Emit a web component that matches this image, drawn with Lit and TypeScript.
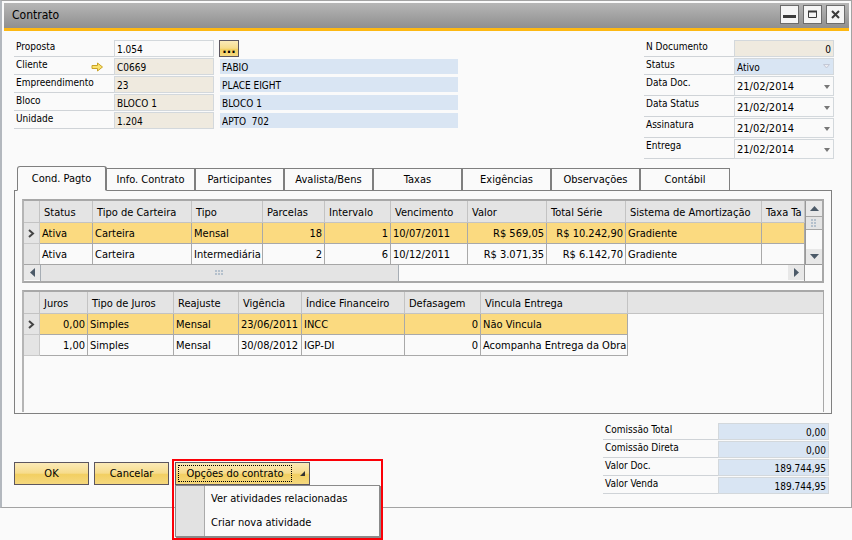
import { LitElement, html, css, svg, nothing } from "lit";
import { customElement } from "lit/decorators.js";
import { classMap } from "lit/directives/class-map.js";

const arrowPaths: Record<string, string> = {
  up: "M0 5L4.500 0L9 5Z",
  down: "M0 0H9L4.500 5Z",
  left: "M5 0V9L0 4.500Z",
  right: "M0 0V9L5 4.500Z",
};

const glyph = (dir: string) => {
  const tall = dir === "left" || dir === "right";
  return html`<svg width=${tall ? 5 : 9} height=${tall ? 9 : 5} aria-hidden="true">
    <path d=${arrowPaths[dir]} fill="#4c5a68"></path>
  </svg>`;
};

const grip = (w: number, h: number) => {
  const cols = w / 3;
  const rows = h / 3;
  const dots = [];
  for (let r = 0; r < rows; r++)
    for (let c = 0; c < cols; c++)
      dots.push(svg`<rect x=${c * 3} y=${r * 3} width="2" height="2" fill="#b4c0cc"></rect>`);
  return html`<svg width=${w} height=${h} aria-hidden="true">${dots}</svg>`;
};

interface Column {
  title: string;
  width: number;
  num?: boolean;
}

@customElement("data-grid")
class DataGrid extends LitElement {
  static properties = {
    columns: { attribute: false },
    rows: { attribute: false },
    label: {},
    fill: { type: Boolean },
  };
  declare columns: Column[];
  declare rows: string[][];
  declare label: string;
  declare fill: boolean;

  static styles = css`
    :host {
      display: block;
      overflow: hidden;
      min-width: 0;
    }
    table {
      border-collapse: separate;
      border-spacing: 0;
      table-layout: fixed;
      width: 100%;
      font: inherit;
    }
    th {
      box-sizing: border-box;
      height: 22px;
      padding: 2px 0 0 4px;
      background: #e4e4e4;
      border-right: 1px solid #c3c3c3;
      border-bottom: 1px solid #c3c3c3;
      font-weight: normal;
      text-align: left;
      white-space: nowrap;
    }
    td {
      box-sizing: border-box;
      height: 21px;
      padding: 1px 2px 0;
      border-right: 1px solid #a9a9a9;
      border-bottom: 1px solid #a9a9a9;
      white-space: nowrap;
    }
    td.num {
      text-align: right;
    }
    tr.current td {
      background: #fbda80;
    }
    tr td.mark,
    tr.current td.mark {
      padding: 0;
      background: #e4e4e4;
      border-color: #c9c9c9;
      text-align: center;
    }
    td.mark svg {
      display: block;
      margin: 0 auto;
    }
    th.rest,
    td.rest {
      border-right: 0;
    }
    tr td.rest,
    tr.current td.rest {
      border-bottom: 0;
      background: none;
    }
  `;

  render() {
    return html`<table aria-label=${this.label}>
      <colgroup>
        <col style="width:16px" />
        ${this.columns.map((c) => html`<col style=${c.width ? `width:${c.width}px` : ""} />`)}
        ${this.fill ? html`<col />` : nothing}
      </colgroup>
      <thead>
        <tr>
          <th></th>
          ${this.columns.map((c) => html`<th scope="col">${c.title}</th>`)}
          ${this.fill ? html`<th class="rest"></th>` : nothing}
        </tr>
      </thead>
      <tbody>
        ${this.rows.map(
          (row, i) => html`<tr class=${classMap({ current: i === 0 })}>
            <td class="mark">
              ${i === 0
                ? html`<svg width="7" height="9" aria-hidden="true">
                    <path d="M1 1L5 4.500L1 8" fill="none" stroke="#444" stroke-width="2"></path>
                  </svg>`
                : nothing}
            </td>
            ${this.columns.map((c, j) => html`<td class=${classMap({ num: !!c.num })}>${row[j]}</td>`)}
            ${this.fill ? html`<td class="rest"></td>` : nothing}
          </tr>`
        )}
      </tbody>
    </table>`;
  }
}

const series: Column[] = [
  { title: "Status", width: 53 },
  { title: "Tipo de Carteira", width: 99 },
  { title: "Tipo", width: 71 },
  { title: "Parcelas", width: 62, num: true },
  { title: "Intervalo", width: 66, num: true },
  { title: "Vencimento", width: 77 },
  { title: "Valor", width: 79, num: true },
  { title: "Total Série", width: 79, num: true },
  { title: "Sistema de Amortização", width: 136 },
  { title: "Taxa Ta", width: 0, num: true },
];
const seriesRows = [
  ["Ativa", "Carteira", "Mensal", "18", "1", "10/07/2011", "R$ 569,05", "R$ 10.242,90", "Gradiente", ""],
  ["Ativa", "Carteira", "Intermediária", "2", "6", "10/12/2011", "R$ 3.071,35", "R$ 6.142,70", "Gradiente", ""],
];

const interest: Column[] = [
  { title: "Juros", width: 48, num: true },
  { title: "Tipo de Juros", width: 86 },
  { title: "Reajuste", width: 65 },
  { title: "Vigência", width: 63 },
  { title: "Índice Financeiro", width: 103 },
  { title: "Defasagem", width: 76, num: true },
  { title: "Vincula Entrega", width: 147 },
];
const interestRows = [
  ["0,00", "Simples", "Mensal", "23/06/2011", "INCC", "0", "Não Vincula"],
  ["1,00", "Simples", "Mensal", "30/08/2012", "IGP-DI", "0", "Acompanha Entrega da Obra"],
];

const tabs = [
  "Cond. Pagto",
  "Info. Contrato",
  "Participantes",
  "Avalista/Bens",
  "Taxas",
  "Exigências",
  "Observações",
  "Contábil",
];

const client = [
  ["Cliente", "C0669", "FABIO"],
  ["Empreendimento", "23", "PLACE EIGHT"],
  ["Bloco", "BLOCO 1", "BLOCO 1"],
  ["Unidade", "1.204", "APTO  702"],
];

const totals = [
  ["Comissão Total", "0,00"],
  ["Comissão Direta", "0,00"],
  ["Valor Doc.", "189.744,95"],
  ["Valor Venda", "189.744,95"],
];

@customElement("app-root")
class AppRoot extends LitElement {
  static styles = css`
    :host {
      display: block;
      min-height: 100vh;
      background: #fafafa;
      color: #000;
      font: 11px/14px "DejaVu Sans Condensed", "Noto Sans", sans-serif;
    }
    * {
      box-sizing: border-box;
    }
    button,
    input,
    select {
      margin: 0;
      font: inherit;
      color: inherit;
      border-radius: 0;
      outline: 0;
    }
    .window {
      border: 1px solid #a3a3a3;
      border-left: 2px solid #b3b8be;
      background: #fafafa;
    }
    .titlebar {
      display: flex;
      align-items: center;
      gap: 4px;
      height: 28px;
      margin: 2px 2px 0;
      padding: 0 4px 2px 8px;
      background: linear-gradient(#b6b6b6, #8f8f8f);
      border-bottom: 3px solid #fdb813;
    }
    h1 {
      flex: 1;
      margin: 0;
      font-size: 12px;
      font-weight: normal;
    }
    .winbtn {
      display: flex;
      align-items: center;
      justify-content: center;
      width: 19px;
      height: 19px;
      padding: 0;
      background: #f5f5f5;
      border: 1px solid #6c6c6c;
    }
    .head {
      display: flex;
      justify-content: space-between;
      align-items: flex-start;
      padding: 9px 17px 0 12px;
      font-size: 10px;
    }
    .line {
      display: flex;
      height: 17px;
      margin-bottom: 1px;
    }
    .line.tall {
      height: 20px;
    }
    .line label {
      display: flex;
      justify-content: space-between;
      width: 100px;
      padding: 0 10px 0 2px;
      line-height: 13px;
      white-space: nowrap;
      border-bottom: 1px solid #cfd3d7;
    }
    .dates .line label {
      width: 90px;
    }
    .line label svg {
      margin-top: 4px;
    }
    .box {
      width: 100px;
      min-width: 0;
      height: 100%;
      padding: 2px 2px 0;
      border: 1px solid #d3d8dc;
      background: #fafafa;
    }
    .box.locked {
      background: #efeadf;
    }
    .box.blue {
      background: #d9e5f3;
    }
    .box.right {
      text-align: right;
    }
    .desc {
      width: 238px;
      height: 15px;
      margin: 1px 0 1px 6px;
      padding: 2px 2px 0;
      border: 0;
      background: #d9e5f3;
    }
    .browse {
      width: 20px;
      height: 17px;
      margin-left: 5px;
      padding: 0;
      font-size: 13px;
      font-weight: bold;
      line-height: 12px;
    }
    .gold {
      border: 1px solid #5c5660;
      background: linear-gradient(#fbeab8, #f6dc8c 48%, #f2cf62 55%, #f5d87e);
    }
    .combo {
      position: relative;
      width: 100px;
      height: 100%;
    }
    .combo select {
      appearance: none;
      padding: 1px 2px 0;
      font-size: 11px;
    }
    .combo .small {
      padding-top: 2px;
      font-size: 10px;
    }
    .combo svg {
      position: absolute;
      right: 4px;
      top: 9px;
      pointer-events: none;
    }
    .combo .small + svg {
      top: 6px;
    }
    .tabs {
      display: flex;
      align-items: flex-end;
      margin: 6px 0 0 15px;
      height: 25px;
    }
    .tab {
      width: 89px;
      height: 23px;
      padding: 0;
      background: #fafafa;
      border: 1px solid #7f7f7f;
      border-left-width: 0;
      border-right-width: 2px;
      white-space: nowrap;
    }
    .tab:last-child {
      border-right-width: 1px;
    }
    .tab.on {
      width: 90px;
      height: 25px;
      border-left-width: 1px;
      border-bottom-color: #fafafa;
      border-radius: 3px 3px 0 0;
      z-index: 1;
    }
    .panel {
      margin: -1px 19px 0 12px;
      padding: 8px 7px 1px;
      border: 1px solid #808080;
    }
    .grid {
      border: 2px solid #a8a8a8;
      border-left-color: #b5b5b5;
    }
    .scroller {
      display: grid;
      grid-template-columns: 1fr 17px;
    }
    .vbar {
      display: flex;
      flex-direction: column;
      justify-content: space-between;
      border-left: 1px solid #999;
      border-bottom: 1px solid #999;
    }
    .arrow {
      display: flex;
      align-items: center;
      justify-content: center;
      width: 16px;
      height: 15px;
      padding: 0;
      border: 0;
      background: #e8e8e8;
    }
    .vthumb {
      display: flex;
      align-items: center;
      justify-content: center;
      height: 14px;
      margin-bottom: auto;
      background: #e4e4e4;
      border: 1px solid #a6a6a6;
      border-width: 1px 0;
    }
    .hbar {
      display: flex;
      height: 17px;
      margin-top: -1px;
      border-top: 1px solid #a6a6a6;
      border-right: 1px solid #999;
    }
    .hthumb {
      display: flex;
      align-items: center;
      justify-content: center;
      width: 46%;
      margin-right: auto;
      background: #e4e4e4;
      border: 1px solid #a6adb4;
      border-width: 0 1px;
    }
    .second {
      min-height: 122px;
      margin-top: 7px;
      border-width: 2px 1px 0 2px;
    }
    .foot {
      display: flex;
      justify-content: space-between;
      align-items: flex-start;
      padding: 9px 22px 12px 12px;
    }
    .actions {
      display: flex;
      gap: 5px;
      padding-top: 39px;
    }
    .action {
      width: 75px;
      height: 23px;
      padding: 0;
    }
    .split {
      position: relative;
      margin-left: 1px;
    }
    .options {
      display: flex;
      align-items: center;
      width: 135px;
      height: 23px;
      padding: 0 4px 0 2px;
    }
    .options span {
      width: 114px;
      height: 17px;
      line-height: 15px;
      border: 1px dotted #000;
      white-space: nowrap;
    }
    .options svg {
      margin-left: auto;
    }
    .outline {
      position: absolute;
      left: -3px;
      top: -3px;
      width: 211px;
      height: 81px;
      border: 2px solid #fb0007;
      pointer-events: none;
    }
    .menu {
      position: absolute;
      left: 0;
      top: 23px;
      width: 205px;
      margin: 0;
      padding: 1px 1px 1px 28px;
      border: 1px solid #8a8a8a;
      background: linear-gradient(90deg, #e2e2e2 28px, #aaa 28px, #aaa 29px, #fafafa 29px);
      box-shadow: 1px 1px 0 #8a8a8a;
      list-style: none;
    }
    .menu button {
      display: block;
      width: 100%;
      height: 24px;
      padding: 0 0 0 7px;
      border: 0;
      background: none;
      text-align: left;
      white-space: nowrap;
    }
    .sums {
      font-size: 10px;
    }
    .sums .line label {
      width: 115px;
    }
    .sums .box {
      width: 111px;
    }
  `;

  private date(label: string, id: string) {
    return html`<div class="line tall">
      <label for=${id}>${label}</label>
      <div class="combo">
        <select class="box" id=${id}><option>21/02/2014</option></select>
        <svg width="6" height="4"><path d="M0 0H6L3 4Z" fill="#777"></path></svg>
      </div>
    </div>`;
  }

  render() {
    return html`<main class="window">
      <header class="titlebar">
        <h1>Contrato</h1>
        <button class="winbtn" aria-label="Minimizar">
          <svg width="13" height="13"><rect y="7" width="13" height="3" fill="#3b3b3b"></rect></svg>
        </button>
        <button class="winbtn" aria-label="Maximizar">
          <svg width="9" height="9">
            <path d="M0.500 1.500H8.500V7.500H0.500Z" fill="none" stroke="#3b3b3b"></path>
            <path d="M0 1.500H9" stroke="#3b3b3b" stroke-width="2"></path>
          </svg>
        </button>
        <button class="winbtn" aria-label="Fechar">
          <svg width="9" height="9"><path d="M1 1L8 8M8 1L1 8" stroke="#3b3b3b" stroke-width="2"></path></svg>
        </button>
      </header>

      <section class="head">
        <div>
          <div class="line">
            <label for="proposta">Proposta</label>
            <input class="box" id="proposta" value="1.054" />
            <button class="browse gold" aria-label="Procurar">...</button>
          </div>
          ${client.map(
            ([label, code, name], i) => html`<div class="line">
              <label for="c${i}"
                >${label}${i === 0
                  ? html`<svg width="13" height="10" aria-hidden="true">
                      <path
                        d="M1 3.500H6.500V1L11.500 5L6.500 9V6.500H1Z"
                        fill="#fbe36c"
                        stroke="#c9a227"
                      ></path>
                    </svg>`
                  : nothing}</label
              >
              <input class="box locked" id="c${i}" readonly value=${code} />
              <input class="desc" aria-label="${label}, nome" readonly value=${name} />
            </div>`
          )}
        </div>
        <div class="dates">
          <div class="line">
            <label for="ndoc">N Documento</label>
            <input class="box locked right" id="ndoc" readonly value="0" />
          </div>
          <div class="line">
            <label for="status">Status</label>
            <div class="combo">
              <select class="box blue small" id="status"><option>Ativo</option></select>
              <svg width="7" height="5"><path d="M0.500 0.500H6.500L3.500 4Z" fill="#ececf0" stroke="#c3c8d6"></path></svg>
            </div>
          </div>
          ${this.date("Data Doc.", "d1")} ${this.date("Data Status", "d2")}
          ${this.date("Assinatura", "d3")} ${this.date("Entrega", "d4")}
        </div>
      </section>

      <nav class="tabs" role="tablist">
        ${tabs.map(
          (t, i) => html`<button
            role="tab"
            aria-selected=${i === 0 ? "true" : "false"}
            class=${classMap({ tab: true, on: i === 0 })}
          >
            ${t}
          </button>`
        )}
      </nav>

      <section class="panel">
        <div class="grid">
          <div class="scroller">
            <data-grid label="Séries" .columns=${series} .rows=${seriesRows}></data-grid>
            <div class="vbar">
              <button class="arrow" aria-label="Subir">${glyph("up")}</button>
              <div class="vthumb">${grip(6, 9)}</div>
              <button class="arrow" aria-label="Descer">${glyph("down")}</button>
            </div>
            <div class="hbar">
              <button class="arrow" aria-label="Esquerda">${glyph("left")}</button>
              <div class="hthumb">${grip(9, 6)}</div>
              <button class="arrow" aria-label="Direita">${glyph("right")}</button>
            </div>
          </div>
        </div>
        <div class="grid second">
          <data-grid label="Juros" fill .columns=${interest} .rows=${interestRows}></data-grid>
        </div>
      </section>

      <footer class="foot">
        <div class="actions">
          <button class="action gold">OK</button>
          <button class="action gold">Cancelar</button>
          <div class="split">
            <button class="options gold" aria-haspopup="menu" aria-expanded="true">
              <span>Opções do contrato</span>
              <svg width="5" height="5"><path d="M5 0V5H0Z" fill="#333"></path></svg>
            </button>
            <menu class="menu">
              <li><button>Ver atividades relacionadas</button></li>
              <li><button>Criar nova atividade</button></li>
            </menu>
            <div class="outline"></div>
          </div>
        </div>
        <div class="sums">
          ${totals.map(
            ([label, value], i) => html`<div class="line">
              <label for="t${i}">${label}</label>
              <input class="box blue right" id="t${i}" readonly value=${value} />
            </div>`
          )}
        </div>
      </footer>
    </main>`;
  }
}
